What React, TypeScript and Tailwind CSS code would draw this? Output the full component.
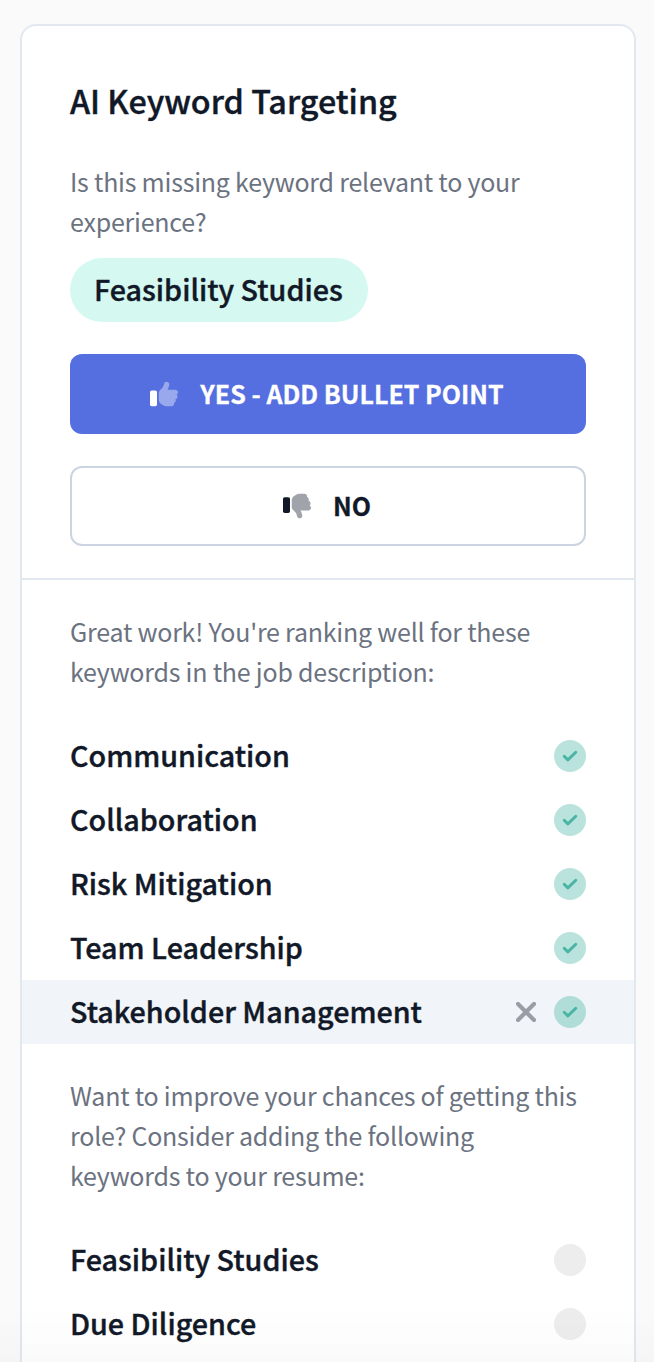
import React from "react";

const matched = [
  { word: "Communication" },
  { word: "Collaboration" },
  { word: "Risk Mitigation" },
  { word: "Team Leadership" },
  { word: "Stakeholder Management", active: true },
];

const missing = ["Feasibility Studies", "Due Diligence"];

const hand =
  "M313.4 32.9c26 5.2 42.9 30.5 37.7 56.5l-2.3 11.4c-5.3 26.7-15.1 52.1-28.8 75.2H464c26.5 0 48 21.5 48 48c0 18.5-10.5 34.6-25.9 42.6C497 275.4 504 288.9 504 304c0 23.4-16.8 42.9-38.9 47.1c4.4 7.3 6.9 15.8 6.9 24.9c0 21.3-13.9 39.4-33.1 45.6c.7 3.3 1.1 6.8 1.1 10.4c0 26.5-21.5 48-48 48H294.5c-19 0-37.5-5.6-53.3-16.1l-38.5-25.7C176 420.4 160 390.4 160 358.3V247.1c0-29.2 13.3-56.7 36-75l7.4-5.9c26.5-21.2 44.6-51 51.2-84.2l2.3-11.4c5.2-26 30.5-42.9 56.5-37.7z";

function ThumbsUp() {
  return (
    <svg viewBox="0 0 512 512" className="h-7 w-7" fill="currentColor">
      <path d="M32 192H96c17.7 0 32 14.3 32 32V448c0 17.7-14.3 32-32 32H32c-17.7 0-32-14.3-32-32V224c0-17.7 14.3-32 32-32z" />
      <path opacity="0.4" d={hand} />
    </svg>
  );
}

function ThumbsDown() {
  return (
    <svg viewBox="0 0 512 512" className="h-7 w-7" fill="currentColor">
      <path d="M32 384H96c17.7 0 32-14.3 32-32V128c0-17.7-14.3-32-32-32H32C14.3 96 0 110.3 0 128V352c0 17.7 14.3 32 32 32z" />
      <path opacity="0.4" transform="matrix(1 0 0 -1 0 512)" d={hand} />
    </svg>
  );
}

function CheckBadge() {
  return (
    <span className="flex h-8 w-8 items-center justify-center rounded-full bg-[#47b5a3]/38">
      <svg
        viewBox="0 0 16 16"
        className="h-4 w-4"
        fill="none"
        stroke="#4ab5a4"
        strokeWidth="2.9"
        strokeLinecap="round"
        strokeLinejoin="round"
      >
        <path d="M2.2 8.2l3.7 3.7 7.9-7.7" />
      </svg>
    </span>
  );
}

function CloseIcon() {
  return (
    <svg
      viewBox="0 0 20 20"
      className="h-5 w-5"
      fill="none"
      stroke="#9b9da6"
      strokeWidth="4.2"
      strokeLinecap="round"
    >
      <path d="M2 2l16 16M18 2L2 18" />
    </svg>
  );
}

function Hint({ children }: { children: React.ReactNode }) {
  return (
    <p className="text-[25px] leading-10 tracking-[-0.225px] text-[#6b7280]">
      {children}
    </p>
  );
}

function Word({ children }: { children: React.ReactNode }) {
  return (
    <span className="pb-[3px] text-[28.7px] leading-10 font-medium [-webkit-text-stroke:0.4px]">
      {children}
    </span>
  );
}

export default function App() {
  return (
    <div className="relative h-[1362px] overflow-hidden bg-[#fafafa] px-5 pt-6 font-['Noto_Sans_CJK_SC',sans-serif] text-[#111827]">
      <div className="h-[1400px] w-[616px] rounded-2xl border-2 border-[#e2e8f0] bg-white">
        <div className="border-b-2 border-[#e2e8f0] px-12 pt-12 pb-8">
          <h1 className="text-[32.3px] leading-[52px] font-medium [-webkit-text-stroke:0.4px]">
            AI Keyword Targeting
          </h1>
          <div className="mt-[35px]">
            <Hint>Is this missing keyword relevant to your experience?</Hint>
          </div>
          <div className="mt-[17px] flex h-16 w-[298px] items-center rounded-full bg-[#d5f9f1] pl-6">
            <Word>Feasibility Studies</Word>
          </div>
          <button className="mt-8 flex h-20 w-full items-center justify-center gap-[22px] rounded-xl bg-[#556ee0] pr-[2px] text-[25px] font-bold text-white [-webkit-text-stroke:0.3px]">
            <ThumbsUp />
            <span className="pb-px">YES - ADD BULLET POINT</span>
          </button>
          <button className="mt-8 flex h-20 w-full items-center justify-center gap-[22px] rounded-xl border-2 border-[#cbd5e1] pr-[2px] text-[25px] font-bold [-webkit-text-stroke:0.3px]">
            <ThumbsDown />
            <span className="pb-px">NO</span>
          </button>
        </div>

        <div className="px-12 pt-[31px] pb-[33px]">
          <Hint>
            Great work! You're ranking well for these keywords in the job
            description:
          </Hint>
        </div>
        <ul>
          {matched.map(({ word, active }) => (
            <li
              key={word}
              className={`flex h-16 items-center px-12 ${active ? "bg-[#f1f5f9]" : ""}`}
            >
              <Word>{word}</Word>
              <div className="ml-auto flex items-center gap-[18px]">
                {active && <CloseIcon />}
                <CheckBadge />
              </div>
            </li>
          ))}
        </ul>

        <div className="px-12 pt-[31px] pb-[33px]">
          <Hint>
            Want to improve your chances of getting this role? Consider adding
            the following keywords to your resume:
          </Hint>
        </div>
        <ul>
          {missing.map((word) => (
            <li key={word} className="flex h-16 items-center justify-between px-12">
              <Word>{word}</Word>
              <span className="h-8 w-8 rounded-full bg-[#ededed]" />
            </li>
          ))}
        </ul>
      </div>
      <div className="absolute inset-x-0 bottom-0 h-14 bg-linear-to-b from-transparent to-black/[0.02]" />
    </div>
  );
}
